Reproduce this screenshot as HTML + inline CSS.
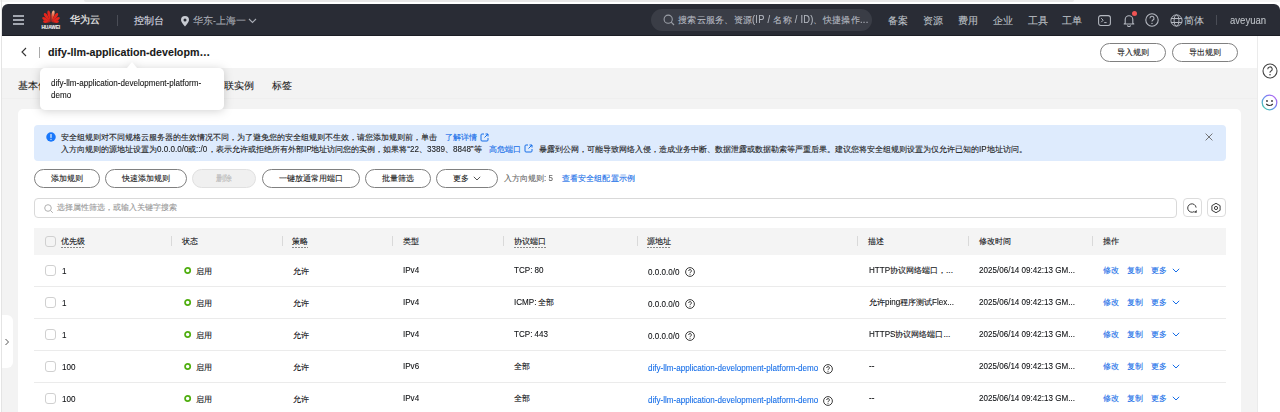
<!DOCTYPE html>
<html><head><meta charset="utf-8">
<style>
*{box-sizing:border-box;margin:0;padding:0}
html,body{width:1280px;height:412px;overflow:hidden;background:#fff;font-family:"Liberation Sans",sans-serif;color:#0f1114;-webkit-text-stroke-width:.1px}
.a{position:absolute;white-space:nowrap}
.L{display:inline-block;line-height:1;transform:scaleX(0.86);transform-origin:0 0;white-space:nowrap;overflow:visible}
.nt{position:absolute;white-space:nowrap;color:#bcc0c6;font-size:9.6px;line-height:12px}
.btn{position:absolute;height:19px;border:1px solid #808080;border-radius:10px;background:#fff;font-size:8.4px;line-height:16.4px;text-align:center;color:#1a1a1a;white-space:nowrap}
.t{position:absolute;font-size:8.4px;line-height:12px;white-space:nowrap;font-weight:500;color:#0f1114}
.lnk{color:#166ee8}
.sep{position:absolute;width:1px;height:10px;background:#d9d9d9}
.dot{background-image:linear-gradient(to right,#8a8a8a 66%,transparent 66%);background-size:3px 1px;background-repeat:repeat-x;background-position:0 100%;padding-bottom:2px}
.cb{position:absolute;width:10.5px;height:10.5px;border:1px solid #d0d0d0;border-radius:3px;background:#fff}
.st{position:absolute;width:7.4px;height:7.4px;border:1.8px solid #4cab10;border-radius:50%}
.rl{position:absolute;left:34px;width:1192px;height:1px;background:#ebebeb}
.lnk{color:#166ee8}
</style></head><body>
<div class="a" style="left:0;top:0;width:1280px;height:2px;background:#f6f6f6"></div>
<div class="a" style="left:84px;top:0;width:990px;height:1.9px;background:#e7e7e7;border-radius:0 0 2px 2px"></div>
<div class="a" style="left:1px;top:0;width:1px;height:412px;background:#e4e4e4"></div>
<div class="a" style="left:2px;top:4px;width:1278px;height:32px;background:#292c35;border-radius:6px 6px 0 0;border-bottom:1px solid #1c1e25"></div>
<div class="a" style="left:2px;top:68px;width:1255px;height:344px;background:#f3f3f3"></div>
<div class="a" style="left:2px;top:97.5px;width:1255px;height:1px;background:#efefef"></div>
<div class="a" style="left:1257px;top:36px;width:23px;height:376px;background:#fff;border-left:1px solid #ebebeb"></div>
<div class="a" style="left:18px;top:109px;width:1223px;height:320px;background:#fff;border-radius:5px"></div>
<div class="a" style="left:12.5px;top:15.3px;width:11px;height:1.5px;background:#a2a6af"></div>
<div class="a" style="left:12.5px;top:19.3px;width:11px;height:1.5px;background:#a2a6af"></div>
<div class="a" style="left:12.5px;top:23.3px;width:11px;height:1.5px;background:#a2a6af"></div>
<svg class="a" style="left:41px;top:10px" width="20" height="13" viewBox="-10 -12 20 13"><defs><linearGradient id="hwc" x1="0" y1="1" x2="0" y2="0"><stop offset="0" stop-color="#e3261d"/><stop offset=".45" stop-color="#ea4a2e"/><stop offset="1" stop-color="#f8c29a"/></linearGradient></defs><g fill="#e3261d"><path transform="translate(-0.45 0) rotate(-11)" d="M0 0 C -0.43 -2.95 -1.45 -5.66 -1.45 -8.50 C -1.45 -10.62 -0.80 -11.80 0 -11.80 C 0.80 -11.80 1.45 -10.62 1.45 -8.50 C 1.45 -5.66 0.43 -2.95 0 0 Z"/><path fill="url(#hwc)" transform="translate(0.45 0) rotate(11)" d="M0 0 C -0.43 -2.95 -1.45 -5.66 -1.45 -8.50 C -1.45 -10.62 -0.80 -11.80 0 -11.80 C 0.80 -11.80 1.45 -10.62 1.45 -8.50 C 1.45 -5.66 0.43 -2.95 0 0 Z"/><path transform="translate(-0.45 0) rotate(-36)" d="M0 0 C -0.45 -2.70 -1.50 -5.18 -1.50 -7.78 C -1.50 -9.72 -0.83 -10.80 0 -10.80 C 0.83 -10.80 1.50 -9.72 1.50 -7.78 C 1.50 -5.18 0.45 -2.70 0 0 Z"/><path transform="translate(0.45 0) rotate(36)" d="M0 0 C -0.45 -2.70 -1.50 -5.18 -1.50 -7.78 C -1.50 -9.72 -0.83 -10.80 0 -10.80 C 0.83 -10.80 1.50 -9.72 1.50 -7.78 C 1.50 -5.18 0.45 -2.70 0 0 Z"/><path transform="translate(-0.45 0) rotate(-61)" d="M0 0 C -0.43 -2.35 -1.45 -4.51 -1.45 -6.77 C -1.45 -8.46 -0.80 -9.40 0 -9.40 C 0.80 -9.40 1.45 -8.46 1.45 -6.77 C 1.45 -4.51 0.43 -2.35 0 0 Z"/><path transform="translate(0.45 0) rotate(61)" d="M0 0 C -0.43 -2.35 -1.45 -4.51 -1.45 -6.77 C -1.45 -8.46 -0.80 -9.40 0 -9.40 C 0.80 -9.40 1.45 -8.46 1.45 -6.77 C 1.45 -4.51 0.43 -2.35 0 0 Z"/><path transform="translate(-0.45 0) rotate(-86)" d="M0 0 C -0.38 -1.85 -1.25 -3.55 -1.25 -5.33 C -1.25 -6.66 -0.69 -7.40 0 -7.40 C 0.69 -7.40 1.25 -6.66 1.25 -5.33 C 1.25 -3.55 0.38 -1.85 0 0 Z"/><path transform="translate(0.45 0) rotate(86)" d="M0 0 C -0.38 -1.85 -1.25 -3.55 -1.25 -5.33 C -1.25 -6.66 -0.69 -7.40 0 -7.40 C 0.69 -7.40 1.25 -6.66 1.25 -5.33 C 1.25 -3.55 0.38 -1.85 0 0 Z"/></g></svg>
<div class="a" style="left:41.5px;top:24.6px;width:18px;font-size:4.8px;line-height:5px;color:#f0f0f0;font-weight:bold;text-align:center;letter-spacing:-.1px">HUAWEI</div>
<div class="nt" style="left:69.5px;top:14px;font-size:10.4px;color:#ececec;font-weight:500;-webkit-text-stroke:.2px #ececec">华为云</div>
<div class="a" style="left:117px;top:15px;width:1px;height:11px;background:#4a4d56"></div>
<div class="nt" style="left:134px;top:14.5px;font-size:10.4px;color:#d9dbe0">控制台</div>
<svg class="a" style="left:180px;top:15.5px" width="10" height="11" viewBox="0 0 10 11"><path d="M5 10.5 C2.5 7.5 1 5.6 1 4 A4 4 0 0 1 9 4 C9 5.6 7.5 7.5 5 10.5 Z M5 2.6 A1.5 1.5 0 1 0 5 5.6 A1.5 1.5 0 1 0 5 2.6 Z" fill="#c8cbd2" fill-rule="evenodd"/></svg>
<div class="nt" style="left:193px;top:14.5px;color:#a9adb5">华东<span class="L" style="font-size:10.00px;width:2.88px">-</span>上海一</div>
<svg class="a" style="left:248px;top:17.5px" width="9" height="6" viewBox="0 0 9 6"><path d="M1 1 L4.5 4.5 L8 1" stroke="#a9adb5" stroke-width="1.1" fill="none"/></svg>
<div class="a" style="left:651px;top:9px;width:221px;height:22px;border-radius:11px;background:#3a3d46"></div>
<svg class="a" style="left:663px;top:14px" width="12" height="12" viewBox="0 0 12 12"><circle cx="5.2" cy="5.2" r="4.1" stroke="#9a9ea6" stroke-width="1.1" fill="none"/><path d="M8.2 8.2 L11 11" stroke="#9a9ea6" stroke-width="1.2"/></svg>
<div class="nt" style="left:678px;top:13.6px;font-size:9.45px;letter-spacing:.28px;color:#b4b8c0">搜索云服务、资源<span class="L" style="font-size:10.80px;width:21.06px">(IP&nbsp;/&nbsp;</span>名称<span class="L" style="font-size:10.80px;width:21.57px">&nbsp;/&nbsp;ID)</span>、快捷操作<span class="L" style="font-size:10.80px;width:8.47px">...</span></div>
<div class="nt" style="left:888px;top:15px">备案</div>
<div class="nt" style="left:923px;top:15px">资源</div>
<div class="nt" style="left:958px;top:15px">费用</div>
<div class="nt" style="left:993px;top:15px">企业</div>
<div class="nt" style="left:1027.5px;top:15px">工具</div>
<div class="nt" style="left:1062px;top:15px">工单</div>
<svg class="a" style="left:1097.5px;top:14.8px" width="13" height="11" viewBox="0 0 13 11"><rect x=".6" y=".6" width="11.8" height="9.8" rx="2.2" stroke="#b4b8c0" stroke-width="1.05" fill="none"/><path d="M3.2 3.2 L5.2 5.2 L3.2 7.2 M6.2 7.6 L8.6 7.6" stroke="#b4b8c0" stroke-width="1" fill="none"/></svg>
<svg class="a" style="left:1121.5px;top:13px" width="14" height="14" viewBox="0 0 14 14"><path d="M3.2 10.3 L3.2 6.6 A3.8 3.8 0 0 1 10.8 6.6 L10.8 10.3 L11.8 11 L2.2 11 Z M5.6 12.2 A1.4 1.4 0 0 0 8.4 12.2" stroke="#b4b8c0" stroke-width="1.1" fill="none" stroke-linejoin="round"/></svg>
<div class="a" style="left:1132px;top:11px;width:5px;height:5px;border-radius:50%;background:#f05454"></div>
<svg class="a" style="left:1145px;top:13px" width="14" height="14" viewBox="0 0 14 14"><circle cx="7" cy="7" r="6.2" stroke="#b4b8c0" stroke-width="1.1" fill="none"/><path d="M5 5.4 A2 2 0 1 1 7.6 7.2 C7 7.5 7 8 7 8.6" stroke="#b4b8c0" stroke-width="1.1" fill="none"/><circle cx="7" cy="10.4" r=".7" fill="#b4b8c0"/></svg>
<svg class="a" style="left:1170px;top:14px" width="13" height="13" viewBox="0 0 13 13"><circle cx="6.5" cy="6.5" r="5.6" stroke="#b4b8c0" stroke-width="1" fill="none"/><ellipse cx="6.5" cy="6.5" rx="2.4" ry="5.6" stroke="#b4b8c0" stroke-width="1" fill="none"/><path d="M1 4.5 H12 M1 8.5 H12" stroke="#b4b8c0" stroke-width="1"/></svg>
<div class="nt" style="left:1184px;top:15px">简体</div>
<div class="a" style="left:1216px;top:15px;width:1px;height:10px;background:#4a4d56"></div>
<div class="nt" style="left:1230px;top:14.8px"><span class="L" style="font-size:11.10px;width:36.08px">aveyuan</span></div>
<svg class="a" style="left:20px;top:47px" width="8" height="10" viewBox="0 0 8 10"><path d="M6 1 L2 5 L6 9" stroke="#333" stroke-width="1.1" fill="none"/></svg>
<div class="a" style="left:39px;top:47px;width:1px;height:10.5px;background:#aaa"></div>
<div class="a" style="left:48px;top:45.8px;font-size:10.7px;line-height:13px;font-weight:bold;color:#191919">dify-llm-application-developm…</div>
<div class="btn" style="left:1100px;top:43px;width:66px">导入规则</div>
<div class="btn" style="left:1172px;top:43px;width:66px">导出规则</div>
<svg class="a" style="left:1262px;top:63px" width="16" height="16" viewBox="0 0 16 16"><circle cx="8" cy="8" r="7" stroke="#444" stroke-width="1.1" fill="none"/><path d="M5.8 6.2 A2.2 2.2 0 1 1 8.7 8.2 C8.1 8.5 8 9 8 9.8" stroke="#444" stroke-width="1.1" fill="none"/><circle cx="8" cy="11.8" r=".8" fill="#444"/></svg>
<svg class="a" style="left:1261px;top:94px" width="17" height="17" viewBox="0 0 17 17"><defs><linearGradient id="g1" x1="1" y1="0" x2="0" y2="1"><stop offset="0" stop-color="#c25cf0"/><stop offset=".5" stop-color="#6a8cf2"/><stop offset="1" stop-color="#3fd6a0"/></linearGradient></defs><circle cx="8.5" cy="8.5" r="7.3" stroke="url(#g1)" stroke-width="1.3" fill="none"/><circle cx="6" cy="7" r=".9" fill="#333"/><circle cx="11" cy="7" r=".9" fill="#333"/><path d="M5.2 10 Q8.5 13 11.8 10" stroke="#333" stroke-width="1.1" fill="none"/></svg>
<div class="a" style="left:18px;top:80px;font-size:10px;line-height:12px;color:#1a1a1a">基本信息</div>
<div class="a" style="left:214px;top:80px;font-size:10px;line-height:12px;color:#1a1a1a">关联实例</div>
<div class="a" style="left:272px;top:80px;font-size:10px;line-height:12px;color:#1a1a1a">标签</div>
<div class="a" style="left:0;top:0;width:300px;height:130px;filter:drop-shadow(0 1px 5px rgba(0,0,0,.18))"><div class="a" style="left:39.5px;top:68px;width:184.5px;height:41.5px;background:#fff;border-radius:5px"></div><div class="a" style="left:126.8px;top:62.2px;width:0;height:0;border-left:5.2px solid transparent;border-right:5.2px solid transparent;border-bottom:6px solid #fff"></div></div>
<div class="a" style="left:51px;top:77px;font-size:9.4px;line-height:12.2px;color:#141414"><span class="L" style="font-size:9.40px;width:150.11px">dify-llm-application-development-platform-</span><br><span class="L" style="font-size:9.40px;width:20.17px">demo</span></div>
<div class="a" style="left:34px;top:125px;width:1192px;height:36px;background:#deebfd;border-radius:4px"></div>
<svg class="a" style="left:46px;top:132px" width="10" height="10" viewBox="0 0 10 10"><circle cx="5" cy="5" r="4.75" fill="#1877fb"/><rect x="4.45" y="2.1" width="1.1" height="3.9" rx=".4" fill="#fff"/><rect x="4.45" y="6.8" width="1.1" height="1.2" rx=".4" fill="#fff"/></svg>
<div class="t" style="left:61px;top:131px;font-size:8.25px;line-height:13px;color:#1a1a1a">安全组规则对不同规格云服务器的生效情况不同，为了避免您的安全组规则不生效，请您添加规则前，单击</div>
<div class="t lnk" style="left:445px;top:131px;font-size:8.25px;line-height:13px">了解详情</div>
<svg class="a" style="left:480px;top:132.5px" width="9" height="9" viewBox="0 0 9 9"><path d="M4 1 H2 A1 1 0 0 0 1 2 V7 A1 1 0 0 0 2 8 H7 A1 1 0 0 0 8 7 V5 M5.5 1 H8 V3.5 M8 1 L4.5 4.5" stroke="#166ee8" stroke-width="1" fill="none"/></svg>
<div class="t" style="left:61px;top:143.2px;font-size:8.25px;line-height:13px;color:#1a1a1a">入方向规则的源地址设置为<span class="L" style="font-size:9.40px;width:31.39px">0.0.0.0/0</span>或<span class="L" style="font-size:9.40px;width:11.21px">::/0</span>，表示允许或拒绝所有外部<span class="L" style="font-size:9.40px;width:7.62px">IP</span>地址访问您的实例，如果将“<span class="L" style="font-size:9.40px;width:8.98px">22</span>、<span class="L" style="font-size:9.40px;width:17.94px">3389</span>、<span class="L" style="font-size:9.40px;width:17.94px">8848</span>”等</div>
<div class="t lnk" style="left:488.5px;top:143.2px;font-size:8.25px;line-height:13px">高危端口</div>
<svg class="a" style="left:524px;top:143.7px" width="9" height="9" viewBox="0 0 9 9"><path d="M4 1 H2 A1 1 0 0 0 1 2 V7 A1 1 0 0 0 2 8 H7 A1 1 0 0 0 8 7 V5 M5.5 1 H8 V3.5 M8 1 L4.5 4.5" stroke="#166ee8" stroke-width="1" fill="none"/></svg>
<div class="t" style="left:539px;top:143.2px;font-size:8.25px;line-height:13px;color:#1a1a1a">暴露到公网，可能导致网络入侵，造成业务中断、数据泄露或数据勒索等严重后果。建议您将安全组规则设置为仅允许已知的<span class="L" style="font-size:9.40px;width:7.62px">IP</span>地址访问。</div>
<svg class="a" style="left:1205px;top:133px" width="8" height="8" viewBox="0 0 8 8"><path d="M.6 .6 L7.4 7.4 M7.4 .6 L.6 7.4" stroke="#666" stroke-width=".9"/></svg>
<div class="btn" style="left:34px;top:169px;width:66px;">添加规则</div>
<div class="btn" style="left:105px;top:169px;width:82px;">快速添加规则</div>
<div class="btn" style="left:192px;top:169px;width:64px;background:#f0f0f0;border-color:#e0e0e0;color:#b8b8b8;">删除</div>
<div class="btn" style="left:262px;top:169px;width:98px;">一键放通常用端口</div>
<div class="btn" style="left:365px;top:169px;width:66px;">批量筛选</div>
<div class="btn" style="left:436px;top:169px;width:62px;text-align:left;padding-left:16px;">更多</div>
<svg class="a" style="left:473px;top:176px" width="8" height="5" viewBox="0 0 8 5"><path d="M.8 .8 L4 4 L7.2 .8" stroke="#555" stroke-width="1" fill="none"/></svg>
<div class="t" style="left:504px;top:172px;color:#666">入方向规则<span class="L" style="font-size:9.40px;width:8.98px">:&nbsp;5</span></div>
<div class="t lnk" style="left:562px;top:172px;font-size:8.4px;letter-spacing:.1px">查看安全组配置示例</div>
<div class="a" style="left:34px;top:198px;width:1143px;height:19.5px;border:1.2px solid #d9d9d9;border-radius:4px;background:#fff"></div>
<svg class="a" style="left:43.5px;top:204px" width="10" height="9" viewBox="0 0 10 9"><circle cx="4" cy="4" r="3.3" stroke="#b0b0b0" stroke-width="1" fill="none"/><path d="M6.5 6.5 L8.8 8.8" stroke="#b0b0b0" stroke-width="1"/></svg>
<div class="t" style="left:57px;top:201px;font-size:8.35px;color:#999">选择属性筛选，或输入关键字搜索</div>
<div class="a" style="left:1183px;top:198px;width:18.5px;height:19px;border:1.2px solid #dcdcdc;border-radius:4px"></div>
<div class="a" style="left:1207px;top:198px;width:18.5px;height:19px;border:1.2px solid #dcdcdc;border-radius:4px"></div>
<svg class="a" style="left:1186.3px;top:201.8px" width="12" height="12" viewBox="0 0 12 12"><path d="M10.1 5.6 A4.2 4.2 0 1 0 8.3 9.5" stroke="#333" stroke-width=".95" fill="none"/><path d="M10.9 8.1 L10.5 10.9 L7.9 10.2 Z" fill="#333"/></svg>
<svg class="a" style="left:1210.4px;top:201.7px" width="12" height="12" viewBox="0 0 12 12"><path d="M6 1.3 L10.1 3.65 L10.1 8.35 L6 10.7 L1.9 8.35 L1.9 3.65 Z" stroke="#333" stroke-width=".95" fill="none" stroke-linejoin="round"/><circle cx="6" cy="6" r="1.6" stroke="#333" stroke-width=".95" fill="none"/></svg>
<div class="a" style="left:34px;top:228px;width:1192px;height:26.5px;background:#f4f4f4"></div>
<div class="cb" style="left:45px;top:236.3px;background:transparent"></div>
<div class="t" style="left:61px;top:235px"><span class="dot">优先级</span></div>
<div class="t" style="left:182px;top:235px">状态</div>
<div class="t" style="left:292px;top:235px"><span class="dot">策略</span></div>
<div class="t" style="left:403px;top:235px">类型</div>
<div class="t" style="left:513.5px;top:235px"><span class="dot">协议端口</span></div>
<div class="t" style="left:647px;top:235px"><span class="dot">源地址</span></div>
<div class="t" style="left:868px;top:235px">描述</div>
<div class="t" style="left:978.5px;top:235px">修改时间</div>
<div class="t" style="left:1102.5px;top:235px">操作</div>
<div class="sep" style="left:171px;top:236px"></div>
<div class="sep" style="left:281.5px;top:236px"></div>
<div class="sep" style="left:391.5px;top:236px"></div>
<div class="sep" style="left:502.5px;top:236px"></div>
<div class="sep" style="left:636.5px;top:236px"></div>
<div class="sep" style="left:857px;top:236px"></div>
<div class="sep" style="left:968px;top:236px"></div>
<div class="sep" style="left:1091.5px;top:236px"></div>
<div class="cb" style="left:45px;top:265.0px"></div>
<div class="t" style="left:61.5px;top:265.0px"><span class="L" style="font-size:9.40px;width:4.49px">1</span></div>
<svg class="a" style="left:183px;top:265.5px" width="9" height="9" viewBox="0 0 9 9"><circle cx="4.65" cy="4.55" r="2.6" stroke="#50ae10" stroke-width="1.7" fill="none"/></svg>
<div class="t" style="left:196px;top:264.7px">启用</div>
<div class="t" style="left:293px;top:264.7px">允许</div>
<div class="t" style="left:403px;top:264.4px"><span class="L" style="font-size:9.40px;width:16.14px">IPv4</span></div>
<div class="t" style="left:513.5px;top:264.4px"><span class="L" style="font-size:9.40px;width:29.58px">TCP:&nbsp;80</span></div>
<div class="t" style="left:648px;top:265.6px"><span class="L" style="font-size:9.40px;width:31.39px">0.0.0.0/0</span></div>
<svg class="a" style="left:685.2px;top:267.0px" width="10" height="10" viewBox="0 0 10 10"><circle cx="5" cy="5" r="4.4" stroke="#333" stroke-width=".95" fill="none"/><path d="M3.7 4 A1.35 1.35 0 1 1 5.5 5.2 C5.1 5.4 5 5.6 5 6.1" stroke="#333" stroke-width=".95" fill="none"/><circle cx="5" cy="7.3" r=".55" fill="#333"/></svg>
<div class="t" style="left:869px;top:264.4px"><span class="L" style="font-size:9.40px;width:21.06px">HTTP</span>协议网络端口，...<span class="L" style="font-size:9.40px;width:2.24px">&nbsp;</span></div>
<div class="t" style="left:979px;top:264.4px"><span class="L" style="font-size:9.40px;width:95.93px">2025/06/14&nbsp;09:42:13&nbsp;GM...</span></div>
<div class="t lnk" style="left:1103px;top:264.4px">修改</div>
<div class="t lnk" style="left:1127px;top:264.4px">复制</div>
<div class="t lnk" style="left:1151px;top:264.4px">更多</div>
<svg class="a" style="left:1171.5px;top:268.0px" width="8" height="5" viewBox="0 0 8 5"><path d="M.8 .8 L4 4 L7.2 .8" stroke="#166ee8" stroke-width="1" fill="none"/></svg>
<div class="rl" style="top:286.0px"></div>
<div class="cb" style="left:45px;top:297.0px"></div>
<div class="t" style="left:61.5px;top:297.0px"><span class="L" style="font-size:9.40px;width:4.49px">1</span></div>
<svg class="a" style="left:183px;top:297.5px" width="9" height="9" viewBox="0 0 9 9"><circle cx="4.65" cy="4.55" r="2.6" stroke="#50ae10" stroke-width="1.7" fill="none"/></svg>
<div class="t" style="left:196px;top:296.7px">启用</div>
<div class="t" style="left:293px;top:296.7px">允许</div>
<div class="t" style="left:403px;top:296.4px"><span class="L" style="font-size:9.40px;width:16.14px">IPv4</span></div>
<div class="t" style="left:513.5px;top:296.4px"><span class="L" style="font-size:9.40px;width:24.64px">ICMP:&nbsp;</span>全部</div>
<div class="t" style="left:648px;top:297.6px"><span class="L" style="font-size:9.40px;width:31.39px">0.0.0.0/0</span></div>
<svg class="a" style="left:685.2px;top:299.0px" width="10" height="10" viewBox="0 0 10 10"><circle cx="5" cy="5" r="4.4" stroke="#333" stroke-width=".95" fill="none"/><path d="M3.7 4 A1.35 1.35 0 1 1 5.5 5.2 C5.1 5.4 5 5.6 5 6.1" stroke="#333" stroke-width=".95" fill="none"/><circle cx="5" cy="7.3" r=".55" fill="#333"/></svg>
<div class="t" style="left:869px;top:296.4px">允许<span class="L" style="font-size:9.40px;width:15.25px">ping</span>程序测试<span class="L" style="font-size:9.40px;width:21.96px">Flex...</span></div>
<div class="t" style="left:979px;top:296.4px"><span class="L" style="font-size:9.40px;width:95.93px">2025/06/14&nbsp;09:42:13&nbsp;GM...</span></div>
<div class="t lnk" style="left:1103px;top:296.4px">修改</div>
<div class="t lnk" style="left:1127px;top:296.4px">复制</div>
<div class="t lnk" style="left:1151px;top:296.4px">更多</div>
<svg class="a" style="left:1171.5px;top:300.0px" width="8" height="5" viewBox="0 0 8 5"><path d="M.8 .8 L4 4 L7.2 .8" stroke="#166ee8" stroke-width="1" fill="none"/></svg>
<div class="rl" style="top:318.0px"></div>
<div class="cb" style="left:45px;top:329.0px"></div>
<div class="t" style="left:61.5px;top:329.0px"><span class="L" style="font-size:9.40px;width:4.49px">1</span></div>
<svg class="a" style="left:183px;top:329.5px" width="9" height="9" viewBox="0 0 9 9"><circle cx="4.65" cy="4.55" r="2.6" stroke="#50ae10" stroke-width="1.7" fill="none"/></svg>
<div class="t" style="left:196px;top:328.7px">启用</div>
<div class="t" style="left:293px;top:328.7px">允许</div>
<div class="t" style="left:403px;top:328.4px"><span class="L" style="font-size:9.40px;width:16.14px">IPv4</span></div>
<div class="t" style="left:513.5px;top:328.4px"><span class="L" style="font-size:9.40px;width:34.06px">TCP:&nbsp;443</span></div>
<div class="t" style="left:648px;top:329.6px"><span class="L" style="font-size:9.40px;width:31.39px">0.0.0.0/0</span></div>
<svg class="a" style="left:685.2px;top:331.0px" width="10" height="10" viewBox="0 0 10 10"><circle cx="5" cy="5" r="4.4" stroke="#333" stroke-width=".95" fill="none"/><path d="M3.7 4 A1.35 1.35 0 1 1 5.5 5.2 C5.1 5.4 5 5.6 5 6.1" stroke="#333" stroke-width=".95" fill="none"/><circle cx="5" cy="7.3" r=".55" fill="#333"/></svg>
<div class="t" style="left:869px;top:328.4px"><span class="L" style="font-size:9.40px;width:26.43px">HTTPS</span>协议网络端口...</div>
<div class="t" style="left:979px;top:328.4px"><span class="L" style="font-size:9.40px;width:95.93px">2025/06/14&nbsp;09:42:13&nbsp;GM...</span></div>
<div class="t lnk" style="left:1103px;top:328.4px">修改</div>
<div class="t lnk" style="left:1127px;top:328.4px">复制</div>
<div class="t lnk" style="left:1151px;top:328.4px">更多</div>
<svg class="a" style="left:1171.5px;top:332.0px" width="8" height="5" viewBox="0 0 8 5"><path d="M.8 .8 L4 4 L7.2 .8" stroke="#166ee8" stroke-width="1" fill="none"/></svg>
<div class="rl" style="top:350.0px"></div>
<div class="cb" style="left:45px;top:361.0px"></div>
<div class="t" style="left:61.5px;top:361.0px"><span class="L" style="font-size:9.40px;width:13.46px">100</span></div>
<svg class="a" style="left:183px;top:361.5px" width="9" height="9" viewBox="0 0 9 9"><circle cx="4.65" cy="4.55" r="2.6" stroke="#50ae10" stroke-width="1.7" fill="none"/></svg>
<div class="t" style="left:196px;top:360.7px">启用</div>
<div class="t" style="left:293px;top:360.7px">允许</div>
<div class="t" style="left:403px;top:360.4px"><span class="L" style="font-size:9.40px;width:16.14px">IPv6</span></div>
<div class="t" style="left:513.5px;top:360.4px">全部</div>
<div class="t lnk" style="left:648px;top:362.2px"><span class="L" style="font-size:9.40px;width:170.28px">dify-llm-application-development-platform-demo</span></div>
<svg class="a" style="left:823px;top:363.6px" width="10" height="10" viewBox="0 0 10 10"><circle cx="5" cy="5" r="4.4" stroke="#333" stroke-width=".95" fill="none"/><path d="M3.7 4 A1.35 1.35 0 1 1 5.5 5.2 C5.1 5.4 5 5.6 5 6.1" stroke="#333" stroke-width=".95" fill="none"/><circle cx="5" cy="7.3" r=".55" fill="#333"/></svg>
<div class="t" style="left:869px;top:360.4px"><span class="L" style="font-size:9.40px;width:5.38px">--</span></div>
<div class="t" style="left:979px;top:360.4px"><span class="L" style="font-size:9.40px;width:95.93px">2025/06/14&nbsp;09:42:13&nbsp;GM...</span></div>
<div class="t lnk" style="left:1103px;top:360.4px">修改</div>
<div class="t lnk" style="left:1127px;top:360.4px">复制</div>
<div class="t lnk" style="left:1151px;top:360.4px">更多</div>
<svg class="a" style="left:1171.5px;top:364.0px" width="8" height="5" viewBox="0 0 8 5"><path d="M.8 .8 L4 4 L7.2 .8" stroke="#166ee8" stroke-width="1" fill="none"/></svg>
<div class="rl" style="top:382.0px"></div>
<div class="cb" style="left:45px;top:393.0px"></div>
<div class="t" style="left:61.5px;top:393.0px"><span class="L" style="font-size:9.40px;width:13.46px">100</span></div>
<svg class="a" style="left:183px;top:393.5px" width="9" height="9" viewBox="0 0 9 9"><circle cx="4.65" cy="4.55" r="2.6" stroke="#50ae10" stroke-width="1.7" fill="none"/></svg>
<div class="t" style="left:196px;top:392.7px">启用</div>
<div class="t" style="left:293px;top:392.7px">允许</div>
<div class="t" style="left:403px;top:392.4px"><span class="L" style="font-size:9.40px;width:16.14px">IPv4</span></div>
<div class="t" style="left:513.5px;top:392.4px">全部</div>
<div class="t lnk" style="left:648px;top:394.2px"><span class="L" style="font-size:9.40px;width:170.28px">dify-llm-application-development-platform-demo</span></div>
<svg class="a" style="left:823px;top:395.6px" width="10" height="10" viewBox="0 0 10 10"><circle cx="5" cy="5" r="4.4" stroke="#333" stroke-width=".95" fill="none"/><path d="M3.7 4 A1.35 1.35 0 1 1 5.5 5.2 C5.1 5.4 5 5.6 5 6.1" stroke="#333" stroke-width=".95" fill="none"/><circle cx="5" cy="7.3" r=".55" fill="#333"/></svg>
<div class="t" style="left:869px;top:392.4px"><span class="L" style="font-size:9.40px;width:5.38px">--</span></div>
<div class="t" style="left:979px;top:392.4px"><span class="L" style="font-size:9.40px;width:95.93px">2025/06/14&nbsp;09:42:13&nbsp;GM...</span></div>
<div class="t lnk" style="left:1103px;top:392.4px">修改</div>
<div class="t lnk" style="left:1127px;top:392.4px">复制</div>
<div class="t lnk" style="left:1151px;top:392.4px">更多</div>
<svg class="a" style="left:1171.5px;top:396.0px" width="8" height="5" viewBox="0 0 8 5"><path d="M.8 .8 L4 4 L7.2 .8" stroke="#166ee8" stroke-width="1" fill="none"/></svg>
<div class="a" style="left:2px;top:315px;width:10.7px;height:53px;background:#fff;border-radius:0 6px 6px 0"></div>
<svg class="a" style="left:4px;top:338px" width="6" height="8" viewBox="0 0 6 8"><path d="M1.5 1 L4.5 4 L1.5 7" stroke="#555" stroke-width="1" fill="none"/></svg>
</body></html>
